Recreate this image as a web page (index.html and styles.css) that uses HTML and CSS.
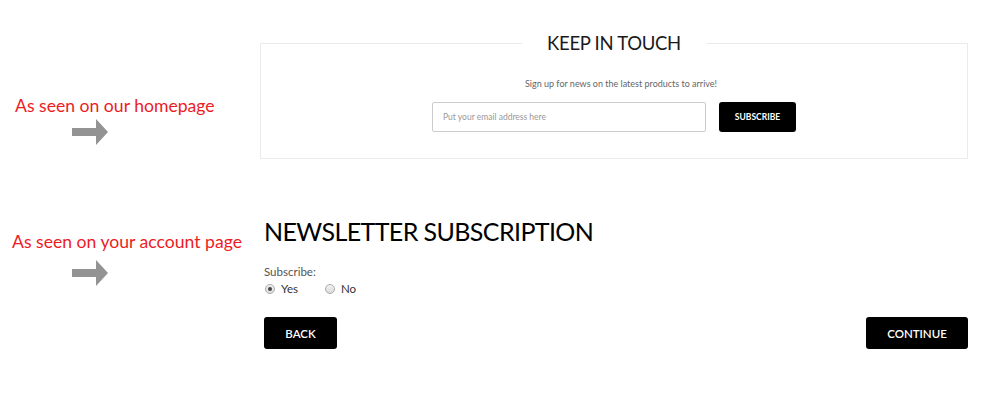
FILE: index.html
```html
<!DOCTYPE html>
<html>
<head>
<meta charset="utf-8">
<link rel="stylesheet" href="styles.css">
</head>
<body>
<div class="page">
  <section class="row row-home">
    <div class="side side-home">
      <div class="side-label">As seen on our homepage</div>
      <svg class="arrow" width="36" height="26" viewBox="0 0 36 26"><path d="M0 9h24V0l12 13-12 13v-9H0z" fill="#939393"/></svg>
    </div>
    <fieldset class="touch">
      <legend class="touch-title">KEEP IN TOUCH</legend>
      <p class="touch-sub">Sign up for news on the latest products to arrive!</p>
      <form class="touch-form">
        <input class="touch-input" type="text" placeholder="Put your email address here">
        <button class="touch-btn" type="button">SUBSCRIBE</button>
      </form>
    </fieldset>
  </section>
  <section class="row row-account">
    <div class="side side-account">
      <div class="side-label">As seen on your account page</div>
      <svg class="arrow" width="36" height="26" viewBox="0 0 36 26"><path d="M0 9h24V0l12 13-12 13v-9H0z" fill="#939393"/></svg>
    </div>
    <div class="account">
      <h1 class="account-title">NEWSLETTER SUBSCRIPTION</h1>
      <div class="field-label">Subscribe:</div>
      <div class="radios">
        <label class="radio"><span class="dot on"></span>Yes</label>
        <label class="radio"><span class="dot"></span>No</label>
      </div>
      <div class="actions">
        <button class="btn btn-back" type="button">BACK</button>
        <button class="btn btn-continue" type="button">CONTINUE</button>
      </div>
    </div>
  </section>
</div>
</body>
</html>
```
FILE: styles.css
```css
* { box-sizing: border-box; }
html, body { margin: 0; padding: 0; background: #fff; }
body { font-family: Lato, "Noto Sans", sans-serif; color: #222; width: 988px; height: 416px; overflow: hidden; }
.page { padding-top: 31px; }
.row { display: flex; }
.side { width: 260px; flex: none; }
.side-label { color: #ed1c24; font-size: 17.6px; line-height: 22px; white-space: nowrap; }
.arrow { display: block; margin-left: 72px; }
.side-home { padding-top: 64px; }
.side-home .side-label { margin-left: 15px; }
.side-home .arrow { margin-top: 2px; }
.side-account .side-label { margin-left: 12px; }
.side-account .arrow { margin-top: 7px; }

.touch { width: 708px; margin: 0; padding: 23px 0 26px; border: 1px solid #ebebeb; text-align: center; min-inline-size: 0; }
.touch-title { margin: 0 auto; padding: 0 25px; font-size: 18.5px; line-height: 24px; color: #1a1a1a; letter-spacing: -0.3px; }
.touch-sub { margin: 0; padding-left: 14px; font-size: 9px; line-height: 12px; color: #666; }
.touch-form { display: flex; justify-content: center; gap: 13px; margin-top: 12px; }
.touch-input { width: 274px; height: 30px; border: 1px solid #ccc; border-radius: 2px; padding: 0 10px; font-family: Lato, sans-serif; font-size: 8.5px; color: #333; }
.touch-input::placeholder { color: #999; }
.touch-btn { width: 77px; height: 30px; background: #000; color: #fff; border: 0; border-radius: 3px; font-family: Lato, sans-serif; font-weight: 700; font-size: 8.5px; padding: 0; }

.row-account { margin-top: 57px; }
.side-account { padding-top: 15px; }
.account { width: 708px; padding-left: 4px; }
.account-title { margin: 0; font-weight: 400; font-size: 25px; line-height: 30px; letter-spacing: -0.6px; color: #000; }
.field-label { margin-top: 18px; font-size: 11.5px; line-height: 15px; color: #555; }
.radios { display: flex; margin-top: 2px; }
.radio { display: flex; align-items: center; font-size: 11.5px; line-height: 15px; color: #333; margin-right: 26px; }
.dot { width: 10px; height: 10px; border-radius: 50%; border: 1px solid #aaa; background: linear-gradient(#f0f0f0, #dcdcdc); margin: 0 6px 0 1px; position: relative; }
.dot.on::after { content: ""; position: absolute; left: 2px; top: 2px; width: 4px; height: 4px; border-radius: 50%; background: #444; }
.actions { display: flex; justify-content: space-between; margin-top: 21px; }
.btn { height: 32px; background: #000; color: #fff; border: 0; border-radius: 3px; font-family: Lato, sans-serif; font-size: 11.5px; font-weight: 600; padding: 0; }
.btn-back { width: 73px; }
.btn-continue { width: 102px; }
```
